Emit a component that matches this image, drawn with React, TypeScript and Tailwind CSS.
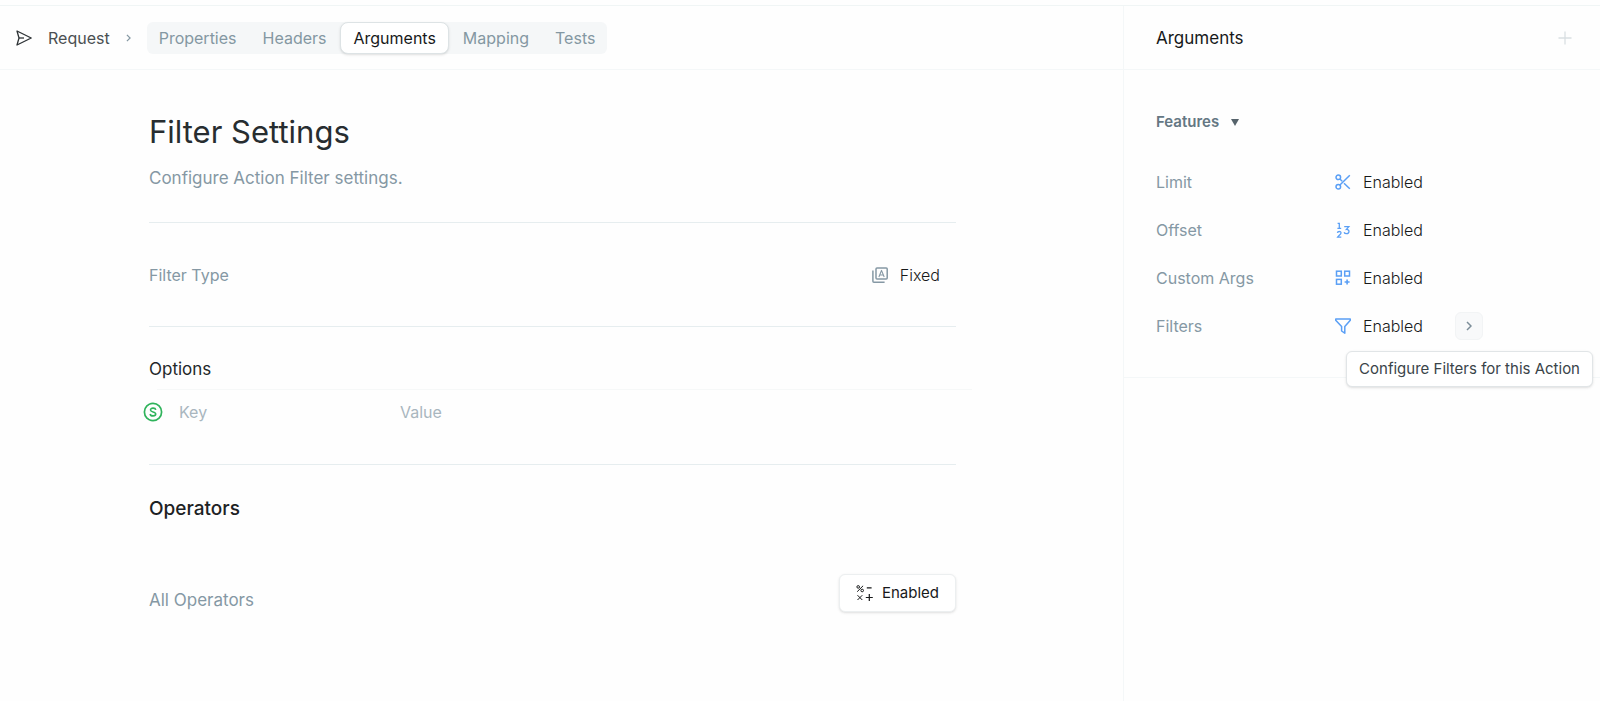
import type { ReactNode } from "react";

const tabs = ["Properties", "Headers", "Arguments", "Mapping", "Tests"];

function SendIcon() {
  return (
    <svg className="size-4 shrink-0 text-[#2d3235]" viewBox="0 0 16 16" fill="none" stroke="currentColor" strokeWidth="1.3" strokeLinejoin="round" aria-hidden="true">
      <path d="M1 1 15.2 8 1 15 3 8Z" />
      <path d="M3 8H8" />
    </svg>
  );
}

function ScissorsIcon() {
  return (
    <svg className="size-4" viewBox="0 0 16 16" fill="none" stroke="currentColor" strokeWidth="1.5" aria-hidden="true">
      <circle cx="3.3" cy="3.3" r="2.3" />
      <circle cx="3.3" cy="12.7" r="2.3" />
      <path d="M4.9 11 14.8 1.3M4.9 5 7.2 7.2M9 9.2 14.8 14.7" />
    </svg>
  );
}

function NumbersIcon() {
  return (
    <svg className="size-4" viewBox="0 0 16 16" fill="none" stroke="currentColor" strokeWidth="1.3" aria-hidden="true">
      <path d="M2.6 1.3H4.3V6.3M2.4 6.3H6.2" />
      <path d="M2.4 10.8C2.6 9.1 6 9 6 10.9 6 12.2 3.6 13.5 2.6 15.1H6.3" />
      <path d="M9.2 4.7H13.8L11.4 7.4C14.8 7.2 14.8 11.7 11.6 11.7 10.3 11.7 9.4 11.2 9.1 10.2" />
    </svg>
  );
}

function AppsAddIcon() {
  return (
    <svg className="size-4" viewBox="0 0 16 16" fill="none" stroke="currentColor" strokeWidth="1.5" aria-hidden="true">
      <rect x="1.5" y="1.2" width="4.8" height="4.8" />
      <rect x="9.7" y="1.2" width="4.8" height="4.8" />
      <rect x="1.5" y="9.4" width="4.8" height="4.8" />
      <path d="M12.1 9.5V14.5M9.6 12H14.6" strokeWidth="1.6" />
    </svg>
  );
}

function FunnelIcon() {
  return (
    <svg className="size-4" viewBox="0 0 16 16" fill="none" stroke="currentColor" strokeWidth="1.5" strokeLinejoin="round" aria-hidden="true">
      <path d="M.7 1H15.3V2.2L9.8 8.6V15.2L6.6 13V8.6L.7 2.2Z" />
    </svg>
  );
}

function FixedIcon() {
  return (
    <svg className="size-4 text-[#8598a4]" viewBox="0 0 16 16" fill="none" stroke="currentColor" strokeWidth="1.5" strokeLinejoin="round" aria-hidden="true">
      <rect x="4" y="1" width="11.2" height="11" rx="1" />
      <path d="M.9 3.6V14.2Q.9 15.2 1.9 15.2H12.6" />
      <path d="M6.9 10 9.5 3.4 12.2 10M7.8 8H11.3" strokeWidth="1.1" />
    </svg>
  );
}

function OperatorsIcon() {
  return (
    <svg className="h-4 w-[17px]" viewBox="0 0 17 16" fill="none" stroke="currentColor" strokeWidth="1" aria-hidden="true">
      <circle cx="2.2" cy="1.9" r="1.3" />
      <circle cx="6.2" cy="5.5" r="1.3" />
      <path d="M7.1.8 1.2 6.7M1.5 10.2 6.3 15M6.3 10.2 1.5 15" />
      <path d="M10.8 2.8H15.6M13.3 9V16M9.8 12.5H16.8" strokeWidth="1.2" />
    </svg>
  );
}

function Chevron({ className }: { className: string }) {
  return (
    <svg className={className} viewBox="0 0 6 10" fill="none" stroke="currentColor" strokeWidth="1.5" aria-hidden="true">
      <path d="M1 1 5 5 1 9" />
    </svg>
  );
}

const features: { label: string; icon: ReactNode }[] = [
  { label: "Limit", icon: <ScissorsIcon /> },
  { label: "Offset", icon: <NumbersIcon /> },
  { label: "Custom Args", icon: <AppsAddIcon /> },
  { label: "Filters", icon: <FunnelIcon /> },
];

function Header() {
  return (
    <header className="flex h-16 items-center border-b border-[#f4f7f8] pl-4">
      <SendIcon />
      <a href="#request" className="ml-4 text-[#4b5052]">Request</a>
      <Chevron className="ml-4 h-2 w-[5px] text-[#8497a2]" />
      <nav className="ml-4 flex h-8 items-center gap-0.5 rounded-md bg-[#f5f7f8]">
        {tabs.map((tab) =>
          tab === "Arguments" ? (
            <button key={tab} type="button" aria-current="page" className="h-8 rounded-lg border border-[#dde3e5] bg-white px-3 text-[#17191a] shadow-sm">
              {tab}
            </button>
          ) : (
            <button key={tab} type="button" className="h-8 px-3 text-[#8497a2]">
              {tab}
            </button>
          ),
        )}
      </nav>
    </header>
  );
}

function Settings() {
  return (
    <section className="pr-[167px] pl-[149px]">
      <div className="border-b border-[#e6edef] pt-11 pb-8">
        <h1 className="text-[31px] leading-9 text-[#272d30]">Filter Settings</h1>
        <p className="mt-4 text-[17px] text-[#8598a4]">Configure Action Filter settings.</p>
      </div>

      <div className="flex h-[104px] items-center justify-between border-b border-[#e6edef] pr-4">
        <span className="text-[#8598a4]">Filter Type</span>
        <button type="button" className="flex items-center gap-3 font-light text-[#17191a]">
          <FixedIcon />
          Fixed
        </button>
      </div>

      <div className="h-[138px] border-b border-[#e6edef] pt-[30px]">
        <h2 className="text-[17px] text-[#222729]">Options</h2>
        <div className="mt-2 -mr-4 ml-2 border-t border-[#f6f8f8]" />
        <div className="-ml-[6px] flex h-11 items-center">
          <svg className="size-5 shrink-0 text-[#2fb35b]" viewBox="0 0 20 20" fill="none" stroke="currentColor" aria-hidden="true">
            <circle cx="10" cy="10" r="8.6" strokeWidth="1.7" />
            <path d="M12.8 7.8C12.3 5.5 7.4 5.6 7.5 8 7.6 10.6 12.7 9.2 12.7 12 12.7 14.5 7.5 14.5 7.1 12" strokeWidth="1.6" />
          </svg>
          <input aria-label="Key" placeholder="Key" className="ml-4 w-[221px] bg-transparent outline-none placeholder:text-[#a9b6be]" />
          <input aria-label="Value" placeholder="Value" className="min-w-0 flex-1 bg-transparent outline-none placeholder:text-[#a9b6be]" />
        </div>
      </div>

      <h2 className="mt-8 text-[19px] font-medium text-[#1d2224]">Operators</h2>
      <div className="mt-[53px] flex items-start justify-between">
        <span className="mt-[14px] text-[17px] text-[#8598a4]">All Operators</span>
        <button type="button" className="flex h-[38px] items-center gap-[9px] rounded-md border border-[#eceff0] bg-white px-4 text-[15px] text-[#17191a] shadow-sm">
          <OperatorsIcon />
          Enabled
        </button>
      </div>
    </section>
  );
}

function Sidebar() {
  return (
    <aside className="w-[477px] shrink-0 border-l border-[#f4f7f8]">
      <div className="flex h-16 items-center justify-between border-b border-[#f4f7f8] pr-7 pl-8">
        <h2 className="text-[17px] text-[#17191a]">Arguments</h2>
        <button type="button" aria-label="Add argument" className="text-[#d9dfe2]">
          <svg className="size-3.5" viewBox="0 0 14 14" stroke="currentColor" strokeWidth="1.3" aria-hidden="true">
            <path d="M7 .5V13.5M.5 7H13.5" />
          </svg>
        </button>
      </div>

      <div className="h-[308px] border-b border-[#f4f7f8] pt-10 pl-8">
        <button type="button" aria-expanded="true" className="flex items-center gap-3 text-[15px] font-semibold text-[#647783]">
          Features
          <svg className="h-[7px] w-2 text-[#56636b]" viewBox="0 0 8 7" fill="currentColor" aria-hidden="true">
            <path d="M0 0H8L4 7Z" />
          </svg>
        </button>
        <ul className="mt-6">
          {features.map(({ label, icon }) => (
            <li key={label} className="flex h-12 items-center">
              <span className="w-[179px] text-[#8598a4]">{label}</span>
              <button type="button" className="flex items-center gap-3 font-light text-[#17191a]">
                <span className="text-[#5a9ff5]">{icon}</span>
                Enabled
              </button>
              {label === "Filters" && (
                <div className="relative ml-8">
                  <button type="button" aria-label="Configure filters" aria-describedby="filters-tip" className="flex size-7 items-center justify-center rounded-md border border-[#f2f4f5] bg-[#f8f9fa]">
                    <Chevron className="h-[10px] w-[6px] text-[#7b8d98]" />
                  </button>
                  <div id="filters-tip" role="tooltip" className="absolute top-[39px] -right-[110px] flex h-9 items-center rounded-md border border-[#e1e5e7] bg-white px-3 text-[15px] whitespace-nowrap text-[#3a4449] shadow-sm">
                    Configure Filters for this Action
                  </div>
                </div>
              )}
            </li>
          ))}
        </ul>
      </div>
    </aside>
  );
}

export default function App() {
  return (
    <div className="min-h-screen bg-[#fefefe] pt-[5px] font-['Inter','Liberation_Sans',sans-serif] text-[16px] leading-6">
      <div className="flex min-h-[calc(100vh-5px)] border-t border-[#f0f5f5]">
        <main className="min-w-0 flex-1">
          <Header />
          <Settings />
        </main>
        <Sidebar />
      </div>
    </div>
  );
}
